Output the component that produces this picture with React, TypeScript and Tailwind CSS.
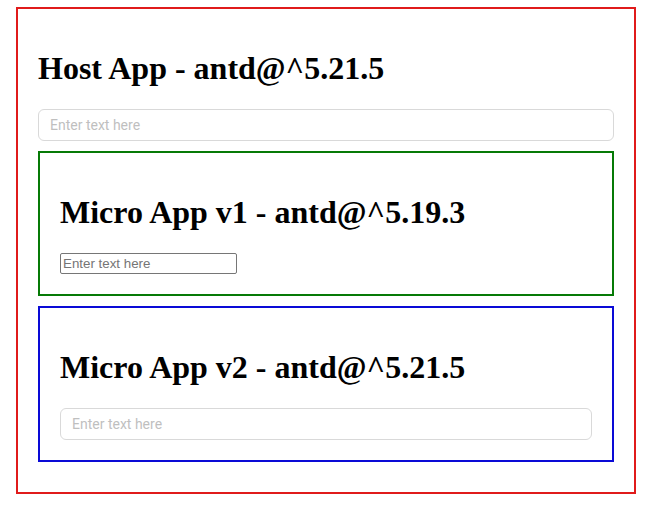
export default function App() {
  return (
    <div className="min-h-[506px] bg-white pt-[7px] pl-4">
      <div className="w-[620px] border-2 border-[#e01b1b] p-5">
        <Heading>Host App - antd@^5.21.5</Heading>
        <AntInput />
        <div className="my-[10px] border-2 border-[#067a06] p-5">
          <Heading>Micro App v1 - antd@^5.19.3</Heading>
          <input
            placeholder="Enter text here"
            className="block h-[21px] w-[177px] rounded-[2px] border border-[#767676] px-[2px] font-['Liberation_Sans',Arial,sans-serif] text-[13.33px] text-black outline-none placeholder:text-[#757575]"
          />
        </div>
        <div className="my-[10px] border-2 border-[#0a0ad6] p-5">
          <Heading>Micro App v2 - antd@^5.21.5</Heading>
          <AntInput />
        </div>
      </div>
    </div>
  );
}

function Heading({ children }: { children: React.ReactNode }) {
  return (
    <h1 className="my-[21.44px] font-['Liberation_Serif','Times_New_Roman',serif] text-[32px] leading-[37px] font-bold text-black">
      {children}
    </h1>
  );
}

function AntInput() {
  return (
    <input
      placeholder="Enter text here"
      className="block h-8 w-full rounded-md border border-[#d9d9d9] bg-white px-[11px] py-1 font-['Segoe_UI',Roboto,'Noto_Sans',sans-serif] text-sm text-black/90 outline-none placeholder:text-[#bfbfbf]"
    />
  );
}
